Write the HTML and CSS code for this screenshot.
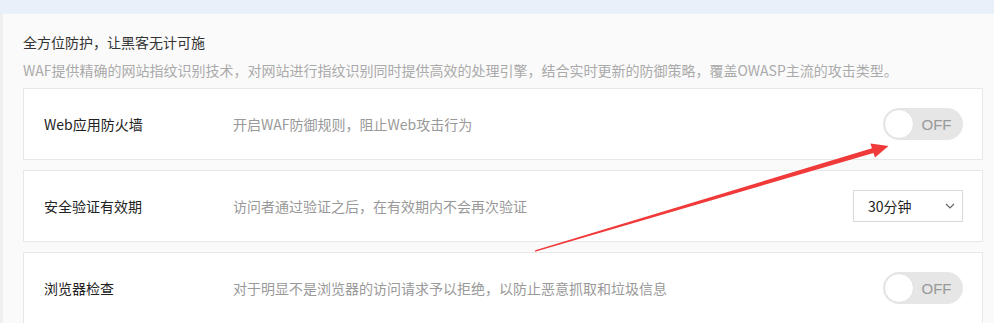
FILE: index.html
```html
<!DOCTYPE html>
<html lang="zh-CN">
<head>
<meta charset="utf-8">
<link rel="stylesheet" href="styles.css">
</head>
<body>
<div class="topband"></div>
<div class="panel">
  <div class="title">全方位防护，让黑客无计可施</div>
  <div class="desc">WAF提供精确的网站指纹识别技术，对网站进行指纹识别同时提供高效的处理引擎，结合实时更新的防御策略，覆盖OWASP主流的攻击类型。</div>
  <div class="card">
    <div class="label">Web应用防火墙</div>
    <div class="info">开启WAF防御规则，阻止Web攻击行为</div>
    <div class="toggle"><span class="knob"></span><span class="toggle-text">OFF</span></div>
  </div>
  <div class="card">
    <div class="label">安全验证有效期</div>
    <div class="info">访问者通过验证之后，在有效期内不会再次验证</div>
    <div class="select"><span>30分钟</span>
      <svg class="chev" width="10" height="6" viewBox="0 0 10 6"><path d="M1 1 L5 5 L9 1" fill="none" stroke="#666" stroke-width="1.2"/></svg>
    </div>
  </div>
  <div class="card">
    <div class="label">浏览器检查</div>
    <div class="info">对于明显不是浏览器的访问请求予以拒绝，以防止恶意抓取和垃圾信息</div>
    <div class="toggle"><span class="knob"></span><span class="toggle-text">OFF</span></div>
  </div>
</div>
<svg class="arrow" width="994" height="323" viewBox="0 0 994 323">
  <polygon fill="#f03a3a" points="535,251.8 535.2,250.3 872,148.2 870.4,143.6 888.5,146 875,157.6 873.5,153"/>
</svg>
</body>
</html>
```
FILE: styles.css
```css
html, body {
  margin: 0;
  padding: 0;
  height: 323px;
  overflow: hidden;
  background: #fafafa;
  font-family: "Microsoft YaHei", "Noto Sans CJK SC", "Noto Sans", sans-serif;
  font-size: 14px;
}
.topband {
  height: 14px;
  background: #e8f1fa;
}
.panel {
  border-left: 3px solid #efefef;
  background: #fafafa;
  padding: 18px 11px 0 20px;
  height: 400px;
}
.title {
  line-height: 20px;
  color: #333;
}
.desc {
  margin-top: 8px;
  line-height: 20px;
  color: #aaa;
}
.card {
  margin-top: 8px;
  height: 70px;
  background: #fff;
  border: 1px solid #e8e8e8;
  display: flex;
  align-items: center;
  padding: 0 19px 0 20px;
}
.card + .card {
  margin-top: 10px;
}
.label {
  width: 189px;
  color: #222;
}
.info {
  flex: 1;
  color: #999;
}
.toggle {
  width: 80px;
  height: 32px;
  border-radius: 16px;
  background: #e6e6e6;
  display: flex;
  align-items: center;
  position: relative;
}
.knob {
  width: 28px;
  height: 28px;
  border-radius: 50%;
  background: #fff;
  border: 1px solid #e0e0e0;
  margin-left: 1px;
}
.toggle-text {
  flex: 1;
  text-align: center;
  color: #999;
  font-size: 15px;
  padding-right: 4px;
  font-family: "Liberation Sans", "Noto Sans", sans-serif;
}
.select {
  height: 30px;
  border: 1px solid #d9d9d9;
  display: flex;
  align-items: center;
  justify-content: space-between;
  padding: 0 7px 0 14px;
  box-sizing: content-box;
  width: 87px;
  color: #222;
}
.chev {
  display: block;
}
.arrow {
  position: absolute;
  left: 0;
  top: 0;
  pointer-events: none;
}
```
